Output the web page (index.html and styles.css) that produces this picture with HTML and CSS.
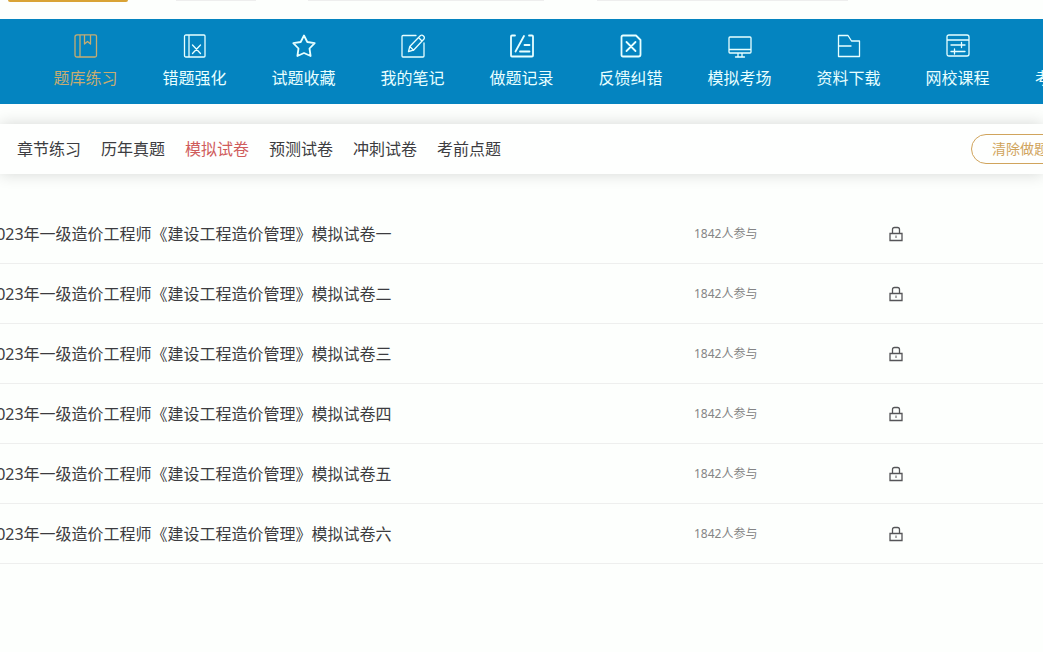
FILE: index.html
```html
<!DOCTYPE html>
<html lang="zh-CN">
<head>
<meta charset="utf-8">
<title>模拟试卷</title>
<link rel="stylesheet" href="styles.css">
</head>
<body>
<svg class="sprite" aria-hidden="true">
  <symbol id="lock" viewBox="0 0 16 16">
    <path d="M4.5 7V3.5Q4.500 1.500 6.500 1.500H9.500Q11.500 1.500 11.500 3.500V7M2 7.500H14V14.500H2Z" fill="none" stroke="currentColor" stroke-width="1.300"/>
    <path d="M8 9.500V12" stroke="currentColor"/>
  </symbol>
</svg>
<header class="top">
  <span class="edge edge-gold"></span>
  <span class="edge edge-small"></span>
  <span class="edge edge-medium"></span>
  <span class="edge edge-large"></span>
</header>
<nav class="nav">
  <a href="#" class="nav-item nav-current"><svg class="icon" viewBox="0 0 24 24"><path d="M3 .8H21Q22.500 .8 22.500 2.300V21.500Q22.500 23 21 23H3Q1 23 1 21V3Q1 .8 3 .8ZM6 1V23M10.500 1V10L13.500 7.500L16.500 10V1"/></svg>题库练习</a>
  <a href="#" class="nav-item"><svg class="icon" viewBox="0 0 24 24"><path d="M3 1H21Q22 1 22 2V22Q22 23 21 23H3Q1.500 23 1.500 21.500V2.500Q1.500 1 3 1ZM6 1V23M9.500 11L17.500 19.500M17.500 11L9.500 19.500"/></svg>错题强化</a>
  <a href="#" class="nav-item"><svg class="icon icon-bold" viewBox="0 0 24 24"><path d="M12 1.500L15.300 8L22.700 9.100L17.500 14.500L18.600 22L12 19L5.400 22L6.500 14.500L1.300 9.100L8.700 8Z"/></svg>试题收藏</a>
  <a href="#" class="nav-item"><svg class="icon" viewBox="0 0 24 24"><path d="M15 1.500H2Q1 1.500 1 2.500V22Q1 23 2 23H22Q23 23 23 22V9M7.500 17.500L8.800 12.500L19.500 1.500Q21 .5 22.500 2T23 5L12.500 16.200ZM17.500 3.500L21 7M8.800 12.500L12.500 16.200"/></svg>我的笔记</a>
  <a href="#" class="nav-item"><svg class="icon icon-bold" viewBox="0 0 24 24"><path d="M5 1.500H2Q1 1.500 1 2.500V21.500Q1 22.500 2 22.500H22Q23 22.500 23 21.500V2.500Q23 1.500 22 1.500H19M14 2L5.500 17.500M14.500 11H19.500M10 17.500H19.500"/></svg>做题记录</a>
  <a href="#" class="nav-item"><svg class="icon icon-bold" viewBox="0 0 24 24"><path d="M4 1.500H17L21.500 6V20.500Q21.500 22.500 19.500 22.500H4Q2.500 22.500 2.500 21V3Q2.500 1.500 4 1.500ZM7.500 8L16.500 17M16.500 8L7.500 17"/></svg>反馈纠错</a>
  <a href="#" class="nav-item"><svg class="icon" viewBox="0 0 24 24"><path d="M2 3H22Q23 3 23 4V18Q23 19 22 19H2Q1 19 1 18V4Q1 3 2 3ZM1 15.500H23M10 19V22.500M14 19V22.500M7.500 23H16.500"/></svg>模拟考场</a>
  <a href="#" class="nav-item"><svg class="icon" viewBox="0 0 24 24"><path d="M1.500 1.500H11L14.500 7H22.500V22.500H1.500ZM1.500 12H14"/></svg>资料下载</a>
  <a href="#" class="nav-item"><svg class="icon" viewBox="0 0 24 24"><path d="M3 1H21Q23 1 23 3V20Q23 22 21 22H3Q1 22 1 20V3Q1 1 3 1ZM1 6H23M5 11H19M15.500 8.500V13.500M5 17.500H19M8.500 15V20"/></svg>网校课程</a>
  <a href="#" class="nav-item nav-last">考</a>
</nav>
<div class="tabs">
  <a href="#" class="tab">章节练习</a>
  <a href="#" class="tab">历年真题</a>
  <a href="#" class="tab tab-current">模拟试卷</a>
  <a href="#" class="tab">预测试卷</a>
  <a href="#" class="tab">冲刺试卷</a>
  <a href="#" class="tab">考前点题</a>
  <button type="button" class="clear">清除做题</button>
</div>
<main class="papers">
  <a href="#" class="paper"><span class="title">2023年一级造价工程师《建设工程造价管理》模拟试卷一</span><span class="count">1842人参与</span><svg class="lock"><use href="#lock"/></svg></a>
  <a href="#" class="paper"><span class="title">2023年一级造价工程师《建设工程造价管理》模拟试卷二</span><span class="count">1842人参与</span><svg class="lock"><use href="#lock"/></svg></a>
  <a href="#" class="paper"><span class="title">2023年一级造价工程师《建设工程造价管理》模拟试卷三</span><span class="count">1842人参与</span><svg class="lock"><use href="#lock"/></svg></a>
  <a href="#" class="paper"><span class="title">2023年一级造价工程师《建设工程造价管理》模拟试卷四</span><span class="count">1842人参与</span><svg class="lock"><use href="#lock"/></svg></a>
  <a href="#" class="paper"><span class="title">2023年一级造价工程师《建设工程造价管理》模拟试卷五</span><span class="count">1842人参与</span><svg class="lock"><use href="#lock"/></svg></a>
  <a href="#" class="paper"><span class="title">2023年一级造价工程师《建设工程造价管理》模拟试卷六</span><span class="count">1842人参与</span><svg class="lock"><use href="#lock"/></svg></a>
</main>
</body>
</html>
```
FILE: styles.css
```css
* {
  box-sizing: border-box;
}

body {
  margin: 0;
  overflow: hidden;
  background: #fdfffd;
  color: #3c3c40;
  font: 16px/24px "Noto Sans", "Noto Sans CJK SC", sans-serif;
}

a {
  color: inherit;
  text-decoration: none;
}

.sprite {
  display: none;
}

.top {
  display: flex;
  align-items: flex-start;
  height: 19px;
  padding-left: 8px;
}

.edge {
  height: 1px;
  background: #eeeeee;
}

.edge-gold {
  width: 120px;
  height: 2px;
  margin-right: 48px;
  border-radius: 0 0 8px 8px;
  background: #d9a336;
}

.edge-small {
  width: 80px;
  margin-right: 52px;
}

.edge-medium {
  width: 236px;
  margin-right: 53px;
}

.edge-large {
  width: 251px;
}

.nav {
  display: flex;
  height: 85px;
  padding-left: 31px;
  background: #0484c0;
  color: #e8ffff;
}

.nav-item {
  display: flex;
  flex: none;
  flex-direction: column;
  align-items: center;
  justify-content: flex-end;
  gap: 8px;
  width: 109px;
  padding-bottom: 14px;
}

.nav-current {
  color: #c6ac72;
}

.nav-last {
  align-items: flex-start;
  padding-left: 23px;
}

.icon {
  width: 24px;
  height: 24px;
  fill: none;
  stroke: currentColor;
  stroke-width: 1.3;
  stroke-linejoin: round;
  stroke-linecap: round;
}

.icon-bold {
  stroke-width: 1.8;
}

.tabs {
  display: flex;
  align-items: center;
  gap: 20px;
  height: 50px;
  margin-top: 20px;
  padding-left: 17px;
  background: #fefffe;
  box-shadow: 0 0 16px rgba(0, 0, 0, 0.16);
}

.tab {
  flex: none;
}

.tab-current {
  color: #cf5c5c;
}

.clear {
  flex: none;
  width: 140px;
  height: 30px;
  margin: 0 -68px 0 auto;
  padding: 0 20px;
  border: 1px solid #d0a45c;
  border-radius: 15px;
  background: transparent;
  color: #d0a45c;
  font: inherit;
  font-size: 14px;
  line-height: 28px;
  text-align: left;
}

.papers {
  margin-top: 30px;
}

.paper {
  display: grid;
  grid-template-columns: 2fr 194px 155px;
  align-items: center;
  height: 60px;
  border-bottom: 1px solid #eeefee;
}

.title {
  margin-left: -13px;
  white-space: nowrap;
}

.count {
  color: #858585;
  font-size: 12px;
}

.lock {
  width: 16px;
  height: 16px;
  color: #555558;
}
```
